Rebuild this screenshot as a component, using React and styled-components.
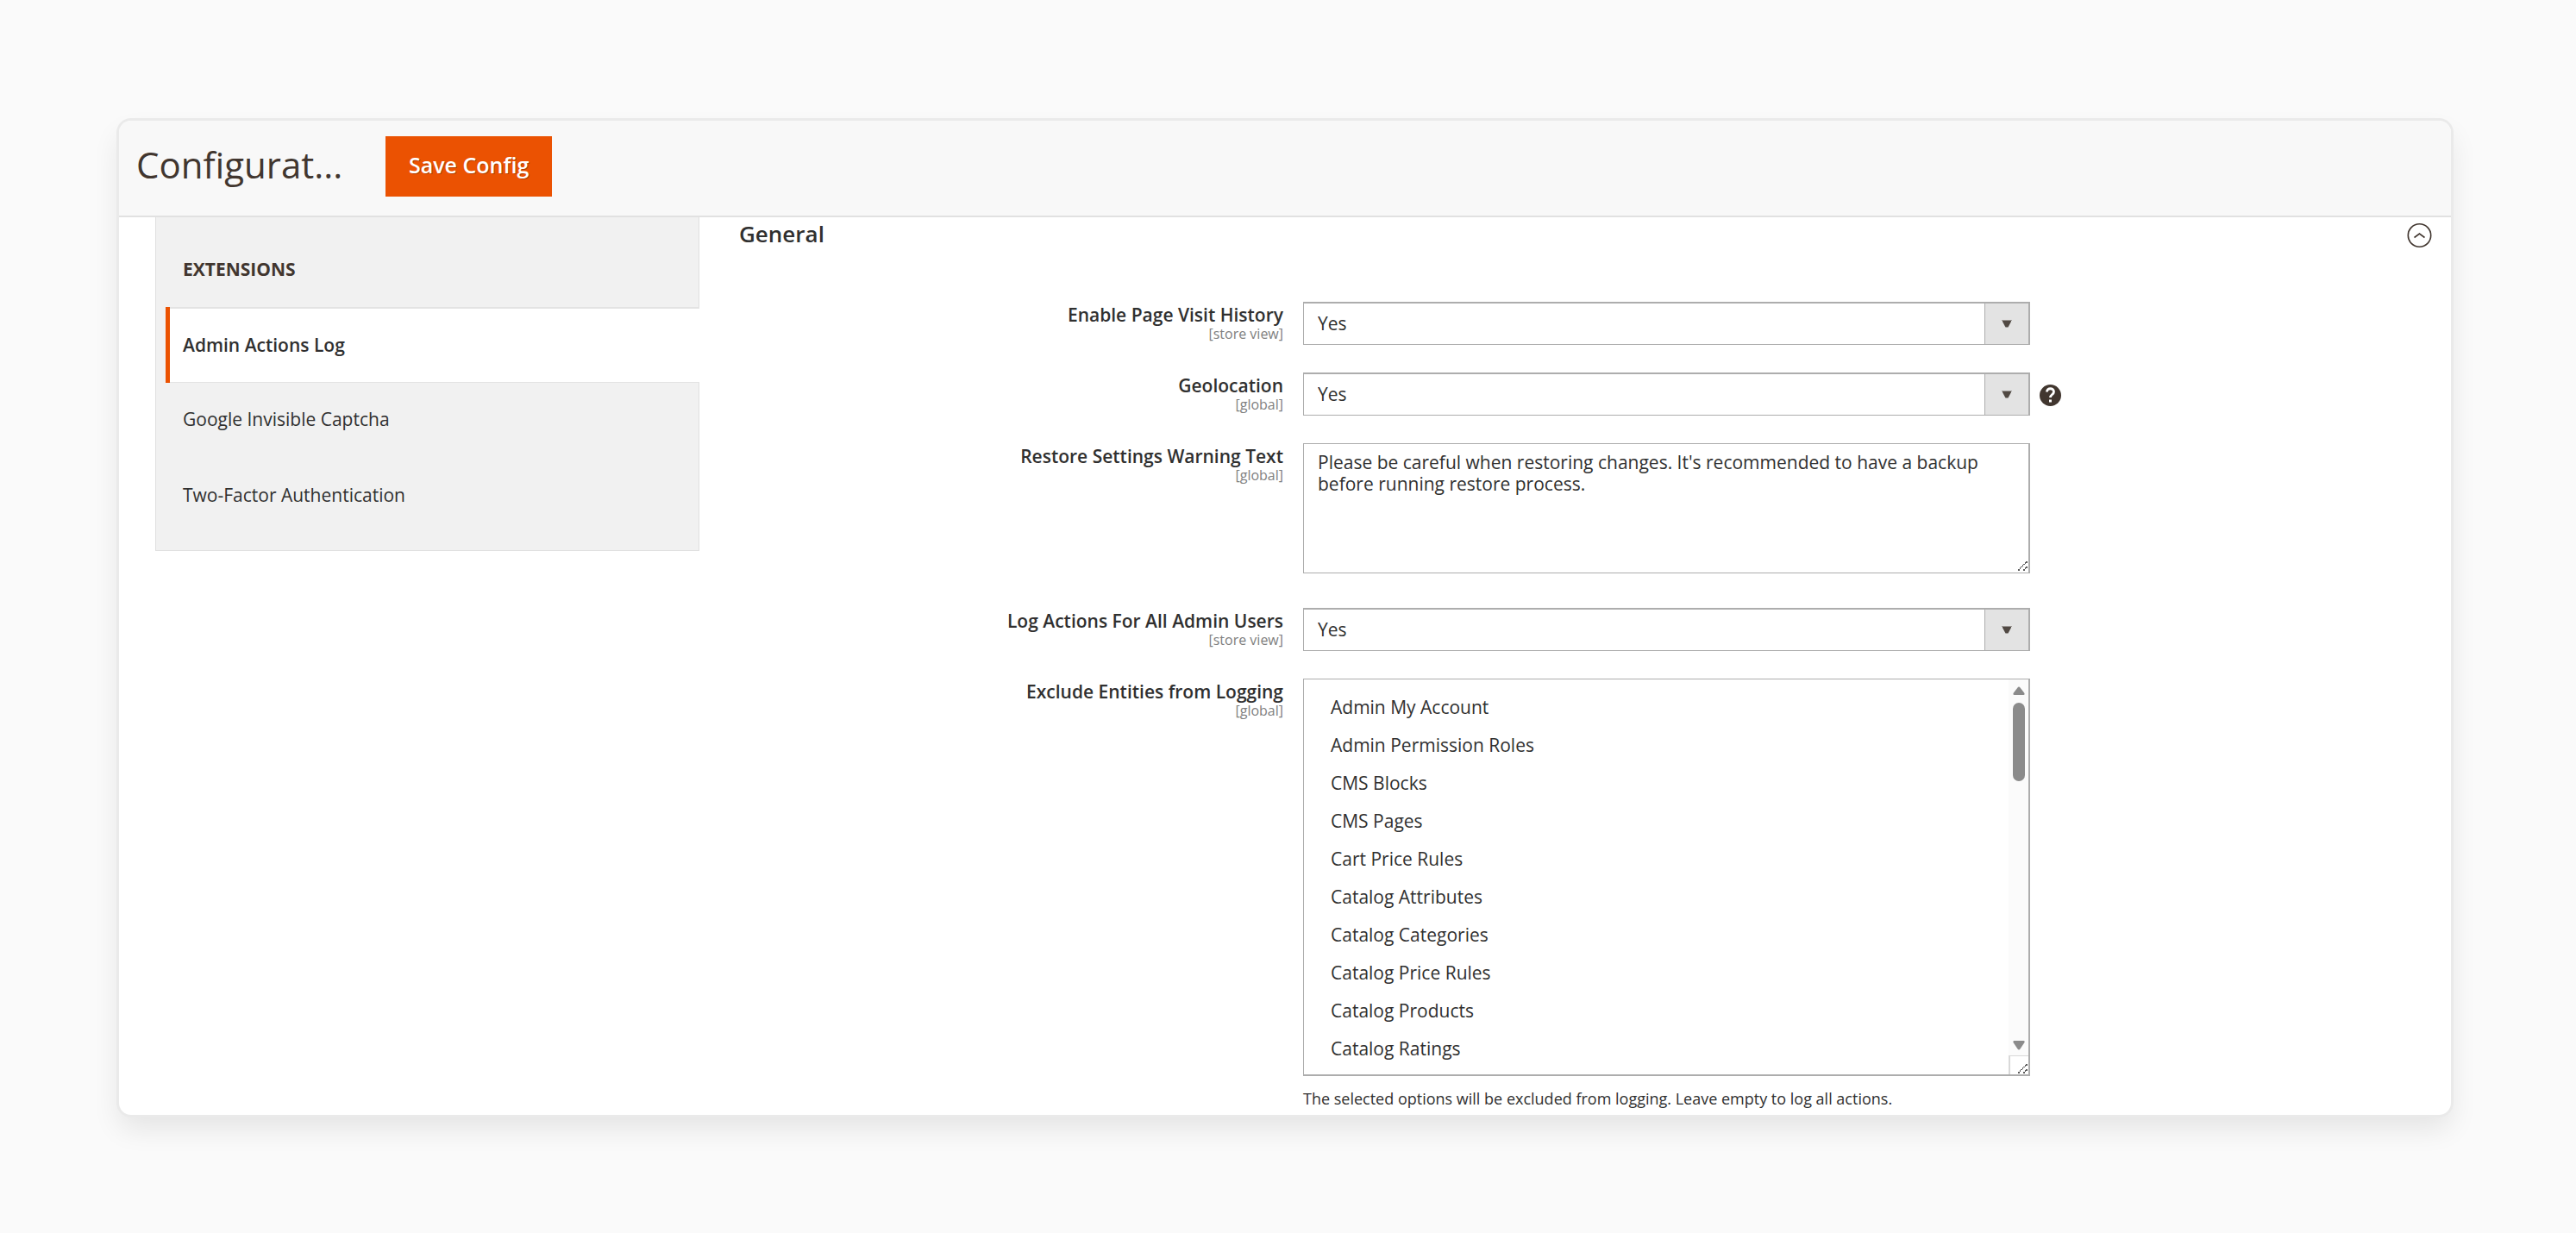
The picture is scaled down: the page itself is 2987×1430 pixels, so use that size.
import { useState } from 'react'
import styled, { createGlobalStyle } from 'styled-components'

const GlobalStyle = createGlobalStyle`
    * {
        box-sizing: border-box;
    }
    body {
        margin: 0;
        background: #fafafa;
        color: #303030;
        font-family: 'Open Sans', 'Noto Sans', sans-serif;
        font-size: 21px;
    }
`
const Page = styled.main`
    padding: 140px 145px 137px 138px;
`
const Card = styled.section`
    overflow: hidden;
    border-radius: 14px;
    background: #fff;
    box-shadow: 0 0 0 3px #eaeaea, 0 16px 32px rgba(0, 0, 0, 0.09);
`
const Toolbar = styled.header`
    display: flex;
    align-items: flex-start;
    gap: 49px;
    height: 112px;
    padding: 18px 20px;
    background: #f8f8f8;
    border-bottom: 2px solid #e1e1e1;
`
const Title = styled.h1`
    width: 240px;
    margin: 0;
    overflow: hidden;
    color: #41362f;
    font-size: 42px;
    font-weight: 400;
    line-height: 66px;
    text-overflow: ellipsis;
    white-space: nowrap;
`
const SaveButton = styled.button`
    height: 70px;
    padding: 0 27px 4px;
    border: 0;
    background: #eb5202;
    color: #fff;
    font: inherit;
    font-size: 25px;
    font-weight: 600;
    text-shadow: 1px 1px 0 rgba(0, 0, 0, 0.25);
`
const Body = styled.div`
    display: grid;
    grid-template-columns: 631fr 1963fr;
    align-items: start;
    column-gap: 46px;
    padding: 0 22px 0 42px;
`
const Sidebar = styled.nav`
    padding-bottom: 18px;
    background: #f1f1f1;
    border: 1px solid #e0e0e0;
    border-top: 0;
`
const SidebarTitle = styled.h2`
    height: 104px;
    margin: 0;
    padding: 0 31px;
    color: #41362f;
    font-size: 21px;
    font-weight: 700;
    line-height: 120px;
`
const NavLink = styled.a`
    display: block;
    height: 88px;
    margin-left: 11px;
    padding-left: 20px;
    color: #303030;
    line-height: 84px;
    text-decoration: none;

    &.active {
        padding-left: 15px;
        background: #fff;
        border-top: 2px solid #e3e3e3;
        border-bottom: 1px solid #e3e3e3;
        font-weight: 600;
    }
`
const ActiveItem = styled.div`
    margin-left: 11px;
    margin-right: -1px;
    border-left: 5px solid #eb5202;

    ${NavLink} {
        margin: 0;
    }
`
const SectionHead = styled.div`
    display: flex;
    align-items: flex-start;
    justify-content: space-between;
    height: 42px;
    margin-bottom: 56px;
`
const SectionTitle = styled.h2`
    margin: 0;
    font-size: 26px;
    font-weight: 600;
    line-height: 38px;
`
const IconButton = styled.button`
    display: flex;
    padding: 7px 0 0;
    border: 0;
    background: none;
`
const Fields = styled.form`
    display: grid;
    gap: 32px;
`
const Row = styled.div`
    display: grid;
    grid-template-columns: 631fr 843fr 443fr;
    align-items: start;
    column-gap: 23px;
`
const Label = styled.label`
    font-weight: 600;
    line-height: 30px;
    text-align: right;
`
const Scope = styled.span`
    display: block;
    color: #808080;
    font-size: 16px;
    font-weight: 400;
    line-height: 14px;
`
const Field = styled.div`
    position: relative;
    padding-bottom: ${(props) => (props.$spaced ? '8px' : '0')};
`
const Select = styled.select`
    display: block;
    width: 100%;
    height: 50px;
    padding: 0 60px 2px 16px;
    appearance: none;
    border: 1px solid #adadad;
    border-width: 2px 2px 1px 1px;
    border-radius: 0;
    background: #fff;
    color: #303030;
    font: inherit;
`
const SelectArrow = styled.span`
    position: absolute;
    top: 2px;
    right: 2px;
    bottom: 1px;
    display: flex;
    align-items: center;
    justify-content: center;
    width: 51px;
    border-left: 1px solid #adadad;
    background: #e3e3e3;
    pointer-events: none;
`
const TextArea = styled.textarea`
    display: block;
    width: 100%;
    height: 151px;
    padding: 9px 16px;
    resize: none;
    border: 1px solid #adadad;
    border-right-width: 2px;
    border-radius: 0;
    background: #fff;
    color: #303030;
    font: inherit;
    line-height: 25px;
`
const Grip = styled.svg`
    position: absolute;
    right: ${(props) => (props.$raised ? '3px' : '1px')};
    bottom: ${(props) => (props.$raised ? '11px' : '1px')};
    pointer-events: none;
`
const ListBox = styled.div`
    position: relative;
    border: 1px solid #adadad;
    border-width: 1px 2px 2px 1px;
`
const MultiSelect = styled.select`
    display: block;
    width: 100%;
    height: 458px;
    padding: 18px 24px 0 16px;
    overflow: hidden;
    border: 0;
    background: #fff;
    color: #303030;
    font: inherit;
    outline: 0;

    option {
        min-height: 44px;
        padding: 0 15px;
        line-height: 44px;
    }
`
const ScrollBar = styled.span`
    position: absolute;
    top: 0;
    right: 0;
    bottom: 0;
    display: flex;
    flex-direction: column;
    align-items: center;
    width: 23px;
    background: #fbfbfb;
    pointer-events: none;
`
const ScrollTrack = styled.span`
    flex: 1;
    width: 14px;
    margin-top: 9px;
`
const ScrollThumb = styled.span`
    display: block;
    height: 91px;
    border-radius: 7px;
    background: #8b8b8b;
`
const ScrollCorner = styled.span`
    width: 100%;
    height: 22px;
    margin-top: 6px;
    border-top: 1px solid #d9d9d9;
    border-left: 2px solid #d9d9d9;
    background: #fff;
`
const Help = styled.span`
    display: flex;
    margin: 14px 0 0 -12px;
`
const Note = styled.p`
    margin: 11px 0 4px;
    font-size: 18px;
    line-height: 30px;
    white-space: nowrap;
`

const entities = [
    'Admin My Account',
    'Admin Permission Roles',
    'CMS Blocks',
    'CMS Pages',
    'Cart Price Rules',
    'Catalog Attributes',
    'Catalog Categories',
    'Catalog Price Rules',
    'Catalog Products',
    'Catalog Ratings',
]

const GripIcon = ({ raised }) => (
    <Grip $raised={raised} width="11" height="11" viewBox="0 0 11 11" aria-hidden="true">
        <path
            d="M0 9h2v2H0zM2 7h1v2H2zM3 6h2v1H3zM5 4h1v2H5zM6 3h2v1H6zM8 1h1v2H8zM9 0h2v2H9zM6 9h2v2H6zM8 7h1v2H8zM9 6h2v2H9z"
            fill="#5b5b5b"
        />
    </Grip>
)

const YesNo = ({ id }) => (
    <Field>
        <Select id={id} defaultValue="Yes">
            <option>Yes</option>
            <option>No</option>
        </Select>
        <SelectArrow>
            <svg width="12" height="9" viewBox="0 0 12 9" aria-hidden="true">
                <path d="M0 0h12v1H0z" fill="#514943" opacity="0.5" />
                <path d="M1 1h10v1L7.500 8.500h-3L1 2z" fill="#514943" />
            </svg>
        </SelectArrow>
    </Field>
)

const FieldLabel = ({ id, scope, children }) => (
    <Label htmlFor={id}>
        {children}
        <Scope>[{scope}]</Scope>
    </Label>
)

function App() {
    const [open, setOpen] = useState(true)

    return (
        <Page>
            <GlobalStyle />
            <Card>
                <Toolbar>
                    <Title>Configurat...</Title>
                    <SaveButton type="button">Save Config</SaveButton>
                </Toolbar>
                <Body>
                    <Sidebar>
                        <SidebarTitle>EXTENSIONS</SidebarTitle>
                        <ActiveItem>
                            <NavLink className="active" href="#log">
                                Admin Actions Log
                            </NavLink>
                        </ActiveItem>
                        <NavLink href="#captcha">Google Invisible Captcha</NavLink>
                        <NavLink href="#two-factor">Two-Factor Authentication</NavLink>
                    </Sidebar>
                    <div>
                        <SectionHead>
                            <SectionTitle>General</SectionTitle>
                            <IconButton
                                type="button"
                                aria-label="Toggle section"
                                aria-expanded={open}
                                onClick={() => setOpen(!open)}
                            >
                                <svg width="29" height="28" viewBox="0 0 29 28" fill="none" stroke="#41362f">
                                    <circle cx="14.500" cy="14" r="13.200" strokeWidth="1.600" />
                                    <path d="M8.500 16.500l6-4.500 6 4.500" strokeWidth="1.600" />
                                </svg>
                            </IconButton>
                        </SectionHead>
                        {open && (
                            <Fields>
                                <Row>
                                    <FieldLabel id="history" scope="store view">
                                        Enable Page Visit History
                                    </FieldLabel>
                                    <YesNo id="history" />
                                </Row>
                                <Row>
                                    <FieldLabel id="geo" scope="global">
                                        Geolocation
                                    </FieldLabel>
                                    <YesNo id="geo" />
                                    <Help>
                                        <svg width="25" height="25" viewBox="0 0 25 25" fill="none">
                                            <circle cx="12.500" cy="12.500" r="12.500" fill="#41362f" />
                                            <path
                                                d="M8.500 8.500c0-5 8-5 8 0 0 3-4 3-4 6.500"
                                                stroke="#fff"
                                                strokeWidth="2.800"
                                            />
                                            <path d="M11 17.500h3v3h-3z" fill="#fff" />
                                        </svg>
                                    </Help>
                                </Row>
                                <Row>
                                    <FieldLabel id="warning" scope="global">
                                        Restore Settings Warning Text
                                    </FieldLabel>
                                    <Field $spaced>
                                        <TextArea
                                            id="warning"
                                            defaultValue="Please be careful when restoring changes. It's recommended to have a backup before running restore process."
                                        />
                                        <GripIcon raised />
                                    </Field>
                                </Row>
                                <Row>
                                    <FieldLabel id="users" scope="store view">
                                        Log Actions For All Admin Users
                                    </FieldLabel>
                                    <YesNo id="users" />
                                </Row>
                                <Row>
                                    <FieldLabel id="exclude" scope="global">
                                        Exclude Entities from Logging
                                    </FieldLabel>
                                    <div>
                                        <ListBox>
                                            <MultiSelect id="exclude" multiple size={10}>
                                                {entities.map((name) => (
                                                    <option key={name}>{name}</option>
                                                ))}
                                            </MultiSelect>
                                            <ScrollBar>
                                                <svg width="14" height="18" viewBox="0 0 14 18" aria-hidden="true">
                                                    <path
                                                        d="M5.500 9.500q1.500-2 3 0l5 6.500q.5 2-1 2h-11q-1.500 0-1-2z"
                                                        fill="#8b8b8b"
                                                    />
                                                </svg>
                                                <ScrollTrack>
                                                    <ScrollThumb />
                                                </ScrollTrack>
                                                <svg width="14" height="11" viewBox="0 0 14 11" aria-hidden="true">
                                                    <path
                                                        d="M1.500 0h11q1.500 0 1 2l-5 7.500q-1.500 2-3 0l-5-7.500q-.5-2 1-2z"
                                                        fill="#8b8b8b"
                                                    />
                                                </svg>
                                                <ScrollCorner />
                                            </ScrollBar>
                                            <GripIcon />
                                        </ListBox>
                                        <Note>
                                            The selected options will be excluded from logging. Leave empty to log all
                                            actions.
                                        </Note>
                                    </div>
                                </Row>
                            </Fields>
                        )}
                    </div>
                </Body>
            </Card>
        </Page>
    )
}

export default App
